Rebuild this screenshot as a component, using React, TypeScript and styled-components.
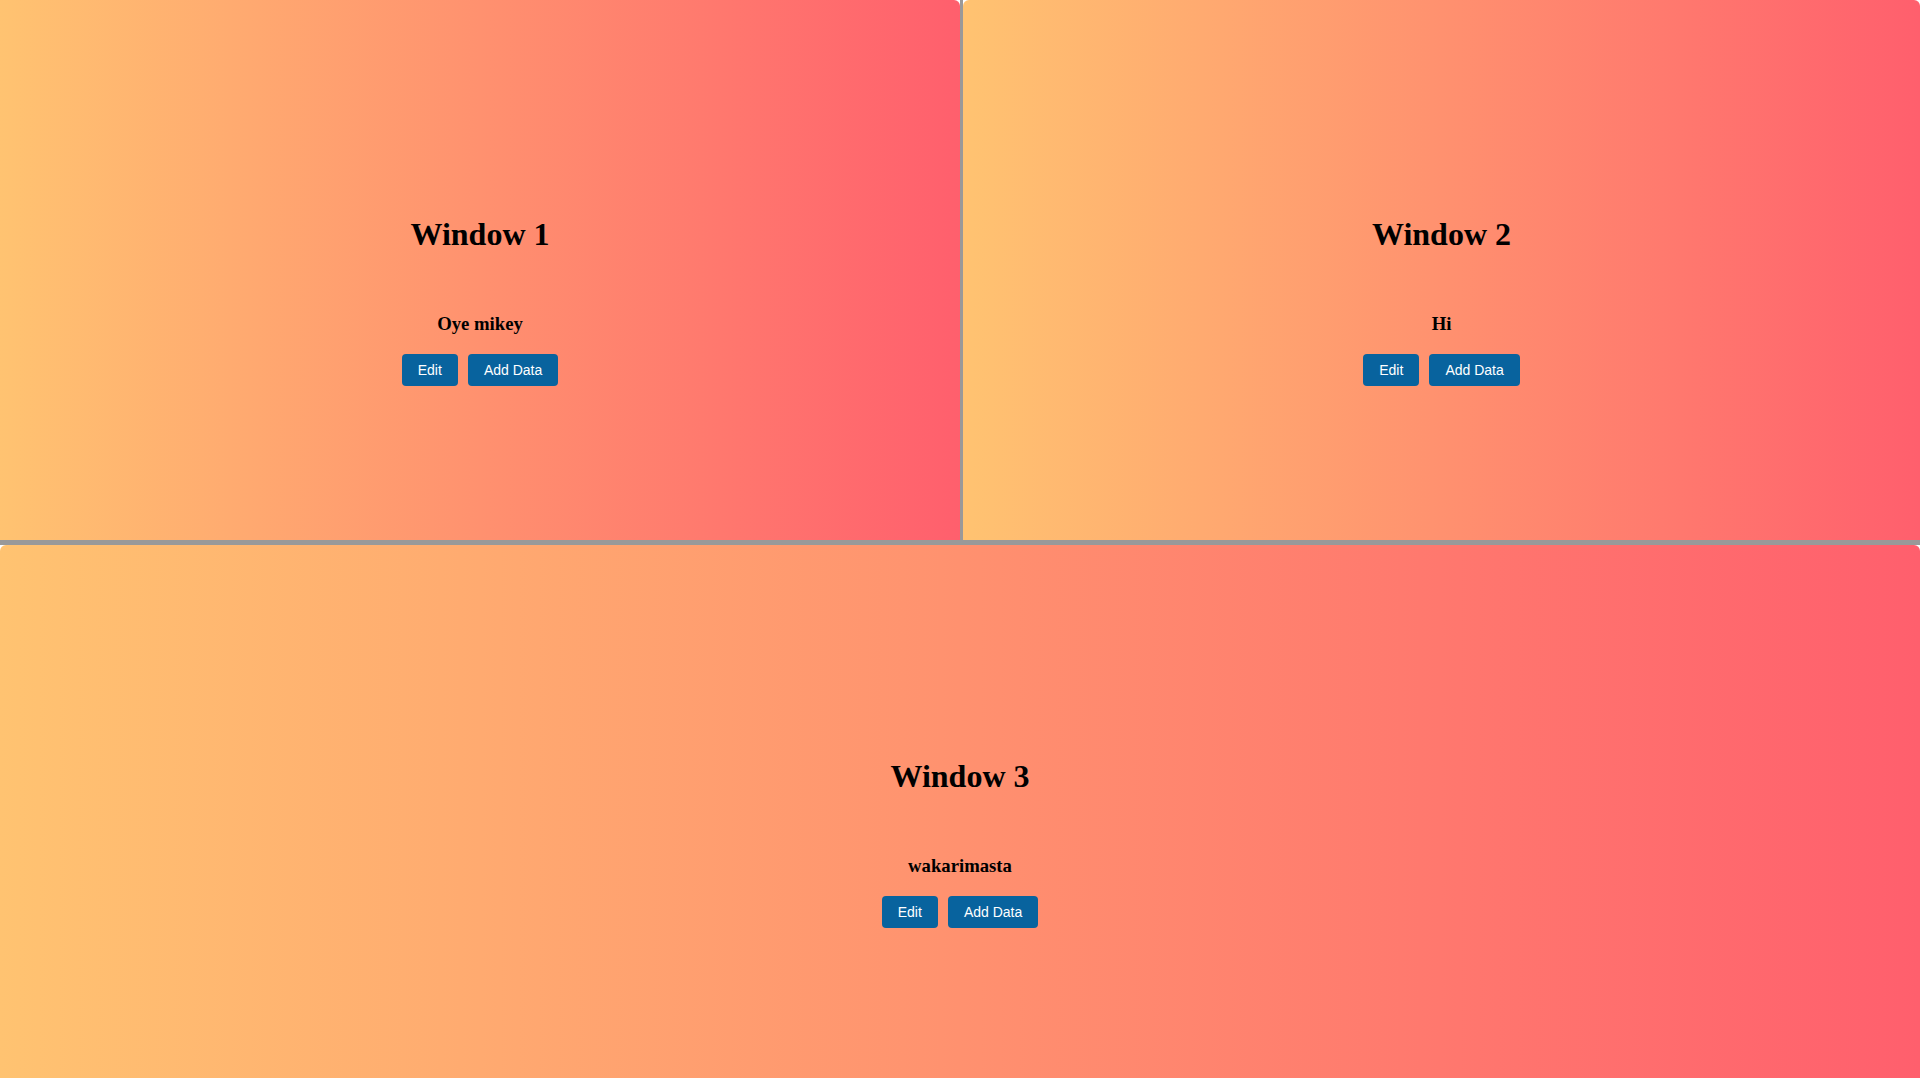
import { createGlobalStyle, styled } from 'styled-components';

const GlobalStyle = createGlobalStyle`
  html, body {
    margin: 0;
    padding: 0;
    background: #ffffff;
  }
  body {
    font-family: "Liberation Serif", "Times New Roman", serif;
  }
`;

const Layout = styled.div`
  display: grid;
  grid-template-rows: 540px 5px 533px;
  width: 1920px;
`;

const TopRow = styled.div`
  display: grid;
  grid-template-columns: 960px 3px 1fr;
`;

const VerticalGutter = styled.div`
  background: #999999;
`;

const HorizontalGutter = styled.div`
  background: #999999;
`;

const Window = styled.section<{ $squareLeft?: boolean }>`
  min-width: 0;
  display: flex;
  flex-direction: column;
  align-items: center;
  justify-content: center;
  padding-top: 62px;
  box-sizing: border-box;
  background: linear-gradient(to right, #ffc371, #ff5f6d);
  border-radius: ${(p) => (p.$squareLeft ? '0 6px 0 0' : '6px 6px 0 0')};
`;

const Title = styled.h1`
  margin: 0 0 60px;
  font-size: 32px;
  font-weight: bold;
  line-height: 37px;
  color: #000;
`;

const Body = styled.h3`
  margin: 0 0 19px;
  font-size: 18.72px;
  font-weight: bold;
  line-height: 22px;
  color: #000;
`;

const Actions = styled.div`
  display: flex;
  gap: 10px;
`;

const Button = styled.button`
  height: 32px;
  padding: 0 16px;
  border: none;
  border-radius: 4px;
  background: #08639e;
  color: #ffffff;
  font-family: "Liberation Sans", Arial, sans-serif;
  font-size: 14px;
  cursor: pointer;
`;

const windows = [
  { title: 'Window 1', text: 'Oye mikey' },
  { title: 'Window 2', text: 'Hi' },
  { title: 'Window 3', text: 'wakarimasta' },
];

const Panel = ({ title, text, squareLeft }: { title: string; text: string; squareLeft?: boolean }) => (
  <Window $squareLeft={squareLeft}>
    <Title>{title}</Title>
    <Body>{text}</Body>
    <Actions>
      <Button>Edit</Button>
      <Button>Add Data</Button>
    </Actions>
  </Window>
);

const App = () => (
  <>
    <GlobalStyle />
    <Layout>
      <TopRow>
        <Panel {...windows[0]} squareLeft />
        <VerticalGutter />
        <Panel {...windows[1]} />
      </TopRow>
      <HorizontalGutter />
      <Panel {...windows[2]} />
    </Layout>
  </>
);

export default App;
